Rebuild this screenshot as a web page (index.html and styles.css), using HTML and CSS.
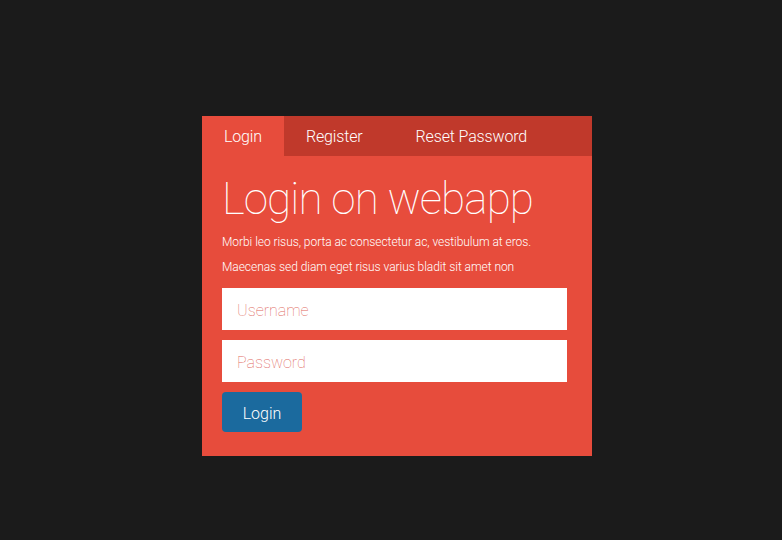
FILE: index.html
```html
<!DOCTYPE html>
<html>
<head>
<meta charset="utf-8">
<link rel="stylesheet" href="styles.css">
</head>
<body>
<div class="page">
  <div class="card">
    <nav class="tabs">
      <a class="tab active">Login</a>
      <a class="tab">Register</a>
      <a class="tab reset">Reset Password</a>
    </nav>
    <div class="body">
      <h1 class="title">Login on webapp</h1>
      <p class="text">Morbi leo risus, porta ac consectetur ac, vestibulum at eros.</p>
      <p class="text">Maecenas sed diam eget risus varius bladit sit amet non</p>
      <input class="field" type="text" placeholder="Username">
      <input class="field" type="password" placeholder="Password">
      <button class="btn">Login</button>
    </div>
  </div>
</div>
</body>
</html>
```
FILE: styles.css
```css
html, body {
  margin: 0;
  padding: 0;
  background: #1b1b1b;
  font-family: Roboto, "Liberation Sans", sans-serif;
}
.page {
  width: 782px;
  height: 540px;
  display: flex;
  justify-content: flex-start;
  align-items: flex-start;
  padding: 116px 0 0 202px;
  box-sizing: border-box;
}
.card {
  width: 390px;
  height: 340px;
  background: #e74c3c;
  display: flex;
  flex-direction: column;
}
.tabs {
  height: 40px;
  background: #c0392b;
  display: flex;
}
.tab {
  height: 40px;
  line-height: 41px;
  padding: 0 22px;
  color: #fff;
  font-size: 16px;
  font-weight: 300;
  letter-spacing: -0.15px;
}
.tab.active {
  background: #e74c3c;
}
.tab.reset {
  padding-left: 31px;
}
.body {
  padding: 0 25px 0 20px;
  display: flex;
  flex-direction: column;
}
.title {
  margin: 17px 0 0 0;
  font-size: 44px;
  line-height: 52px;
  font-weight: 100;
  letter-spacing: -0.9px;
  color: #fff;
}
.text {
  margin: 7px 0 0 0;
  font-size: 12px;
  line-height: 21px;
  font-weight: 300;
  letter-spacing: -0.05px;
  color: #fff;
}
.text + .text {
  margin-top: 4px;
}
.field {
  margin: 0;
  width: 345px;
  height: 42px;
  box-sizing: border-box;
  border: none;
  outline: none;
  background: #fff;
  padding: 2px 15px 0 15px;
  font-family: Roboto, "Liberation Sans", sans-serif;
  font-size: 16px;
  font-weight: 100;
  color: #333;
}
.text + .field { margin-top: 10px; }
.field + .field { margin-top: 10px; }
.field::placeholder {
  color: #e0675c;
}
.btn {
  margin-top: 10px;
  width: 80px;
  height: 40px;
  border: none;
  border-radius: 4px;
  background: #1b6a9e;
  color: #fff;
  font-family: Roboto, "Liberation Sans", sans-serif;
  font-size: 16px;
  font-weight: 300;
  padding: 2px 0 0 0;
}
```
